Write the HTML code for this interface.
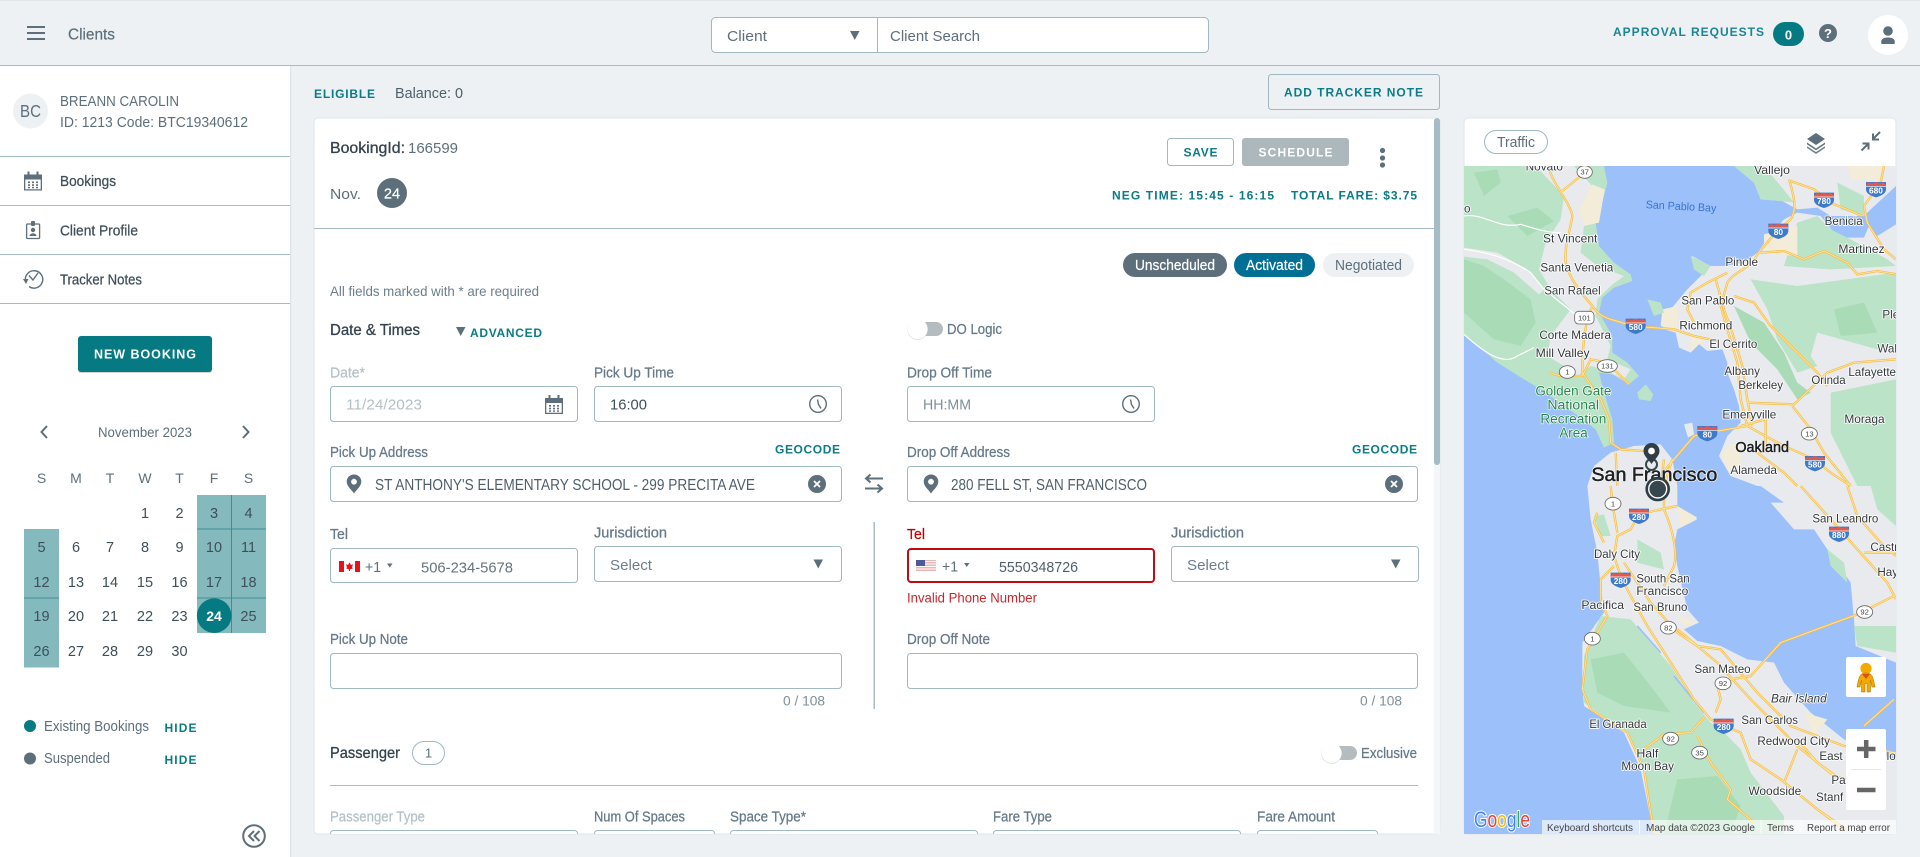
<!DOCTYPE html>
<html lang="en"><head><meta charset="utf-8"><title>Clients</title>
<style>
html,body{margin:0;padding:0;background:#edf1f4;overflow:hidden}
svg{display:block}
text{font-family:"Liberation Sans",sans-serif}
.r{font-size:15px;fill:#5c6f7b}
.d{font-size:15px;fill:#3f4f59}
.l{font-size:14.5px;fill:#64798a;stroke:#64798a;stroke-width:.25}
.g{font-size:14.5px;fill:#b3c0c6}
.h{font-size:12px;font-weight:bold;fill:#0a7c87}
.s{font-size:15.5px;fill:#33434d;stroke:#33434d;stroke-width:.3}
.c{font-size:14.5px;fill:#3f4f59;text-anchor:middle}
.w{font-size:14px;fill:#5c6f7b;text-anchor:middle}
.b{fill:#fff;stroke:#9fb8c2;stroke-width:1}
.m{font-size:35px;fill:#33373b;stroke:#fff;stroke-width:5;paint-order:stroke;stroke-linejoin:round}
.gg{font-size:41px;fill:#23864a;stroke:#fff;stroke-width:4;paint-order:stroke}
.sh{font-size:25px;font-weight:bold;fill:#fff;text-anchor:middle}
.st{font-size:23px;fill:#444;text-anchor:middle}
.ft{font-size:10.5px;fill:#444}
.dk{fill:#202124;stroke:#202124;stroke-width:1.4}
</style></head>
<body>
<svg xmlns="http://www.w3.org/2000/svg" width="1920" height="857" viewBox="0 0 1920 857">
<defs>
<clipPath id="mapclip"><rect x="1464" y="166" width="432" height="668"/></clipPath>
<clipPath id="cardclip"><rect x="314" y="118" width="1126" height="716"/></clipPath>
<g id="cal" fill="#5c6f7b"><path fill-rule="evenodd" d="M0,3H18V19H0ZM1.3,8V17.7H16.7V8Z"/><rect x="3.5" y="0" width="2" height="5"/><rect x="12.5" y="0" width="2" height="5"/><path d="M4,10h2v1.6H4zM8,10h2v1.6H8zM12,10h2v1.6h-2zM4,12.8h2v1.6H4zM8,12.8h2v1.6H8zM12,12.8h2v1.6h-2zM4,15.4h2v1.4H4zM8,15.4h2v1.4H8zM12,15.4h2v1.4h-2z"/></g>
<g id="clock" fill="none" stroke="#5c6f7b" stroke-width="1.4"><circle r="8.3"/><path d="M-.5,-4.5L.5,0.5L3,4.5"/></g>
<path id="pin" fill="#5c6f7b" fill-rule="evenodd" d="M0,-9.5C-4.2,-9.5-7.3,-6.4-7.3,-2.4C-7.3,2.5-2,6,0,9.5C2,6,7.3,2.5,7.3,-2.4C7.3,-6.4,4.2,-9.5,0,-9.5ZM0,-5.2A2.9,2.9 0 1 1 -.01,-5.2Z"/>
<g id="xc"><circle r="9" fill="#5c6f7b"/><path d="M-3,-3L3,3M3,-3L-3,3" stroke="#fff" stroke-width="1.8"/></g>
<path id="tri" fill="#5c6f7b" d="M0,0H9.5L4.75,9Z"/>
<g id="toggle"><rect x="9" y="3" width="27" height="14" rx="7" fill="#b4bcc0"/><circle cx="10.5" cy="10.5" r="10.3" fill="#d8dde0"/><circle cx="10.5" cy="10" r="10" fill="#fff"/></g>
<g id="ist"><path d="M-30,-22H30V0Q30,15 0,24Q-30,15 -30,0Z" fill="#3f79c9"/><path d="M-30,-14L-22,-21L-12,-18L0,-22L12,-18L22,-21L30,-14V-9H-30Z" fill="#dc5a50"/><path d="M-30,-9H30" stroke="#fff" stroke-width="2"/></g>
<g id="road1" fill="none">
<path d="M255,0C255,40 320,110 325,150C320,190 300,240 305,290C315,340 360,390 385,420C400,440 410,450 440,460L490,475L545,483L630,490L690,510L760,525"/>
<path d="M385,420C360,470 355,560 355,620L410,700L435,760L440,830L470,850L540,855"/>
<path d="M295,75L350,30"/>
<path d="M975,40C990,90 1000,130 980,160L930,205L880,265C860,310 810,315 790,350L770,420L790,490L820,590L830,700L850,780"/>
<path d="M755,340L780,430L805,500L835,600L850,700L865,780"/>
<path d="M850,780L730,800L690,810L630,880L600,915"/>
<path d="M980,45L1050,70L1110,115L1150,130L1195,150"/>
<path d="M1260,0L1250,50L1200,120L1210,170L1260,250L1296,280"/>
<path d="M890,260L960,255L1020,280L1080,255L1150,290L1180,325L1240,315L1296,325"/>
<path d="M790,320L730,350L680,380L670,430L690,470"/>
<path d="M810,390L870,410L920,480L990,550L1060,620L1090,660"/>
<path d="M850,710L990,715L1090,620L1170,590L1296,580"/>
<path d="M985,720L1040,790L1080,860L1160,960"/>
<path d="M850,780L960,840L1050,880L1100,920L1160,960"/>
<path d="M880,860L960,920L1000,960"/>
<path d="M600,960L625,880M590,960L600,880"/>
<path d="M460,960L455,860"/>
<path d="M255,620L290,630L355,630L380,580L430,590L460,620L495,655"/>
<path d="M830,780L905,760L905,860"/>
</g>
<g id="road2" fill="none">
<path d="M590,70L525,85L500,130L460,150L450,210L470,270L500,330L550,420L620,530L690,640L740,700L780,720L830,740L860,820L950,880L1060,970L1140,1030"/>
<path d="M600,0L600,70C630,140 640,200 630,240L600,300M590,70L640,60"/>
<path d="M480,230L560,350L640,440L700,480L770,490L880,620L980,720L1140,780L1296,800"/>
<path d="M640,430L760,530L860,640L1000,780L1110,870L1146,880"/>
<path d="M800,580L860,570L950,470L1180,385L1290,330"/>
<path d="M760,600L770,640L755,680M720,695L680,740L600,745L540,790"/>
<path d="M440,0L445,50L460,140M400,80L390,110L420,170M450,240L410,280L410,340L430,390L370,490L355,610L380,670L490,740L540,850L570,1044"/>
<path d="M700,750L740,830L800,910L790,940L870,1010"/>
<path d="M960,890L1000,790"/>
<path d="M1010,0L1100,100L1180,190L1270,290L1296,340M1150,0L1180,90L1250,170L1296,210M1200,200L1296,200"/>
<path d="M1200,720L1290,640"/>
<path d="M1000,760L1060,830L1130,880M1060,970L1146,1030"/>
</g>
</defs>

<rect width="1920" height="857" fill="#edf1f4"/>
<rect width="1920" height="1" fill="#dfe5e8"/>
<rect y="65" width="1920" height="1" fill="#a3bcc6"/>

<!-- header -->
<g fill="#5c6f7b"><rect x="27" y="26" width="18" height="2"/><rect x="27" y="32" width="18" height="2"/><rect x="27" y="38" width="18" height="2"/></g>
<text x="68" y="39.5" class="r" style="font-size:15.5px" stroke="#5c6f7b" stroke-width=".2" textLength="47" lengthAdjust="spacingAndGlyphs">Clients</text>
<rect class="b" x="711.5" y="17.5" width="497" height="35" rx="4"/>
<rect x="877" y="18" width="1" height="34" fill="#9fb8c2"/>
<text x="727" y="41" class="r" textLength="40" lengthAdjust="spacingAndGlyphs">Client</text>
<use href="#tri" x="850" y="31"/>
<text x="890" y="41" class="r" textLength="90" lengthAdjust="spacingAndGlyphs">Client Search</text>
<text x="1613" y="36" class="h" style="fill:#1a8595" textLength="151" lengthAdjust="spacing">APPROVAL REQUESTS</text>
<rect x="1773" y="22" width="31" height="24" rx="12" fill="#067a82"/>
<text x="1788.5" y="39.5" text-anchor="middle" style="font-size:13px;font-weight:bold;fill:#fff">0</text>
<circle cx="1828" cy="33" r="9" fill="#5c6f7b"/>
<text x="1828" y="38" text-anchor="middle" style="font-size:13px;font-weight:bold;fill:#fff">?</text>
<circle cx="1888" cy="35" r="20" fill="#fff"/>
<circle cx="1888" cy="31" r="4.8" fill="#5c6f7b"/>
<path d="M1881.5,44C1880,39 1884,37.5 1888,37.5C1892,37.5 1896,39 1894.5,44Z" fill="#5c6f7b"/>

<!-- sidebar -->
<rect y="66" width="290" height="791" fill="#fff"/>
<rect x="290" y="66" width="1.5" height="791" fill="#dfe6ea"/>
<circle cx="30.5" cy="111" r="17.5" fill="#edf1f4"/>
<text x="30.5" y="117" text-anchor="middle" style="font-size:17.5px;fill:#5c6f7b" textLength="21" lengthAdjust="spacingAndGlyphs">BC</text>
<text x="60" y="106" class="r" textLength="119" lengthAdjust="spacingAndGlyphs">BREANN CAROLIN</text>
<text x="60" y="127" class="r" textLength="188" lengthAdjust="spacingAndGlyphs">ID: 1213 Code: BTC19340612</text>
<g fill="#a3bcc6"><rect y="156" width="290" height="1"/><rect y="205" width="290" height="1"/><rect y="254" width="290" height="1"/><rect y="303" width="290" height="1"/></g>
<use href="#cal" x="24" y="171.5"/>
<text x="60" y="186" class="d" style="font-size:14.5px" stroke="#3f4f59" stroke-width=".25" textLength="56" lengthAdjust="spacingAndGlyphs">Bookings</text>
<g fill="none" stroke="#5c6f7b" stroke-width="1.3"><rect x="26.6" y="224" width="13" height="14.5" rx="1"/></g>
<rect x="31" y="221" width="4" height="5" rx="1" fill="#5c6f7b"/>
<circle cx="33" cy="230" r="2.2" fill="#5c6f7b"/><path d="M29.5,236C29.5,232.5 36.5,232.5 36.5,236Z" fill="#5c6f7b"/>
<text x="60" y="235.5" class="d" style="font-size:14.5px" stroke="#3f4f59" stroke-width=".25" textLength="78" lengthAdjust="spacingAndGlyphs">Client Profile</text>
<path d="M25.5,281A8.7,8.7 0 1 1 29,286.5M29,275.5L33,280L38,273" fill="none" stroke="#5c6f7b" stroke-width="1.4"/>
<path d="M23,279H28.5L26,284Z" fill="#5c6f7b"/>
<text x="60" y="284.5" class="d" style="font-size:14.5px" stroke="#3f4f59" stroke-width=".25" textLength="82" lengthAdjust="spacingAndGlyphs">Tracker Notes</text>
<rect x="78" y="337" width="134" height="36" rx="3" fill="#000" fill-opacity=".18"/>
<rect x="78" y="336" width="134" height="36" rx="3" fill="#067a82"/>
<text x="94" y="358.5" style="font-size:12.5px;font-weight:bold;fill:#fff" textLength="102" lengthAdjust="spacing">NEW BOOKING</text>
<path d="M47,426L41.5,432L47,438M243,426L248.5,432L243,438" fill="none" stroke="#5c6f7b" stroke-width="2"/>
<text x="98" y="437" class="r" style="font-size:14px" textLength="94" lengthAdjust="spacingAndGlyphs">November 2023</text>
<g><text x="41.5" y="483" class="w">S</text><text x="76" y="483" class="w">M</text><text x="110" y="483" class="w">T</text><text x="145" y="483" class="w">W</text><text x="179.5" y="483" class="w">T</text><text x="214" y="483" class="w">F</text><text x="248.5" y="483" class="w">S</text></g>
<rect x="197" y="495" width="69" height="138" fill="#84babd"/>
<rect x="24" y="529" width="35" height="138.5" fill="#84babd"/>
<path d="M231.5,495V633M197,529H266M24,598H59M197,598H266" stroke="#3e8f95" stroke-width="1" fill="none"/>
<ellipse cx="214.2" cy="615.7" rx="17.3" ry="17.3" fill="#067a82"/>
<text x="145" y="518" class="c">1</text><text x="179.5" y="518" class="c">2</text><text x="214" y="518" class="c">3</text><text x="248.5" y="518" class="c">4</text>
<text x="41.5" y="552" class="c">5</text><text x="76" y="552" class="c">6</text><text x="110" y="552" class="c">7</text><text x="145" y="552" class="c">8</text><text x="179.5" y="552" class="c">9</text><text x="214" y="552" class="c">10</text><text x="248.5" y="552" class="c">11</text>
<text x="41.5" y="587" class="c">12</text><text x="76" y="587" class="c">13</text><text x="110" y="587" class="c">14</text><text x="145" y="587" class="c">15</text><text x="179.5" y="587" class="c">16</text><text x="214" y="587" class="c">17</text><text x="248.5" y="587" class="c">18</text>
<text x="41.5" y="621" class="c">19</text><text x="76" y="621" class="c">20</text><text x="110" y="621" class="c">21</text><text x="145" y="621" class="c">22</text><text x="179.5" y="621" class="c">23</text><text x="214" y="621" text-anchor="middle" style="font-size:14px;font-weight:bold;fill:#fff">24</text><text x="248.5" y="621" class="c">25</text>
<text x="41.5" y="656" class="c">26</text><text x="76" y="656" class="c">27</text><text x="110" y="656" class="c">28</text><text x="145" y="656" class="c">29</text><text x="179.5" y="656" class="c">30</text>
<circle cx="30" cy="726" r="6" fill="#067a82"/>
<text x="44" y="731" class="r" style="font-size:14.5px" textLength="105" lengthAdjust="spacingAndGlyphs">Existing Bookings</text>
<text x="164.5" y="732" class="h" textLength="32" lengthAdjust="spacing">HIDE</text>
<circle cx="30" cy="758.5" r="6" fill="#5c6f7b"/>
<text x="44" y="763" class="r" style="font-size:14.5px" textLength="66" lengthAdjust="spacingAndGlyphs">Suspended</text>
<text x="164.5" y="764" class="h" textLength="32" lengthAdjust="spacing">HIDE</text>
<circle cx="254" cy="836" r="10.8" fill="none" stroke="#5c6f7b" stroke-width="2"/>
<path d="M254,831L249,836L254,841M259.5,831L254.5,836L259.5,841" fill="none" stroke="#5c6f7b" stroke-width="2"/>

<!-- main top -->
<text x="314" y="98" class="h" textLength="61" lengthAdjust="spacing">ELIGIBLE</text>
<text x="395" y="98" class="r" style="fill:#4e5f6a" textLength="68" lengthAdjust="spacingAndGlyphs">Balance: 0</text>
<rect x="1268.5" y="74.5" width="171" height="35" rx="3" fill="#edf1f4" stroke="#9fb8c2"/>
<text x="1284" y="96.5" class="h" textLength="139" lengthAdjust="spacing">ADD TRACKER NOTE</text>

<!-- booking card -->
<rect x="314" y="118" width="1126" height="716" rx="4" fill="#fff" stroke="#dde5e9" stroke-width="1"/>
<rect x="1434" y="118" width="6" height="716" fill="#f4f6f7"/>
<rect x="1434" y="118" width="6" height="347" rx="3" fill="#a3bcc6"/>
<text x="330" y="153" class="s" textLength="75" lengthAdjust="spacingAndGlyphs">BookingId:</text>
<text x="408" y="153" class="r" textLength="50" lengthAdjust="spacingAndGlyphs">166599</text>
<text x="330" y="199" class="r" textLength="31" lengthAdjust="spacingAndGlyphs">Nov.</text>
<circle cx="392" cy="193" r="15" fill="#5c6f7b"/>
<text x="392" y="198.5" text-anchor="middle" style="font-size:14.5px;fill:#fff" stroke="#fff" stroke-width=".2">24</text>
<rect x="1167.5" y="138.5" width="66" height="27" rx="3" fill="#fff" stroke="#9fb8c2"/>
<text x="1183.5" y="156.5" class="h" textLength="34" lengthAdjust="spacing">SAVE</text>
<rect x="1242" y="138" width="107" height="28" rx="3" fill="#acb8bc"/>
<text x="1258.5" y="156.5" class="h" style="fill:#fff" textLength="74" lengthAdjust="spacing">SCHEDULE</text>
<g fill="#5c6f7b"><circle cx="1382.5" cy="150.5" r="2.6"/><circle cx="1382.5" cy="158" r="2.6"/><circle cx="1382.5" cy="165" r="2.6"/></g>
<text x="1112" y="199.5" class="h" textLength="162" lengthAdjust="spacing">NEG TIME: 15:45 - 16:15</text>
<text x="1291" y="199.5" class="h" textLength="126" lengthAdjust="spacing">TOTAL FARE: $3.75</text>
<rect x="314" y="228" width="1120" height="1" fill="#a3bcc6"/>
<rect x="1123" y="253" width="104" height="24" rx="12" fill="#5c6f7b"/>
<text x="1135" y="270" style="font-size:14.5px;fill:#fff" stroke="#fff" stroke-width=".2" textLength="80" lengthAdjust="spacingAndGlyphs">Unscheduled</text>
<rect x="1234" y="253" width="81" height="24" rx="12" fill="#006f96"/>
<text x="1246" y="270" style="font-size:14.5px;fill:#fff" stroke="#fff" stroke-width=".2" textLength="57" lengthAdjust="spacingAndGlyphs">Activated</text>
<rect x="1323" y="253" width="91" height="24" rx="12" fill="#edf1f4"/>
<text x="1335" y="270" style="font-size:14.5px;fill:#5c6f7b" textLength="67" lengthAdjust="spacingAndGlyphs">Negotiated</text>
<text x="330" y="296" style="font-size:14px;fill:#6b7f8b" textLength="209" lengthAdjust="spacingAndGlyphs">All fields marked with * are required</text>
<text x="330" y="335" class="s" textLength="90" lengthAdjust="spacingAndGlyphs">Date &amp; Times</text>
<path d="M456,327H465.5L460.7,336Z" fill="#5c6f7b"/>
<text x="470" y="337" class="h" textLength="72" lengthAdjust="spacing">ADVANCED</text>
<use href="#toggle" x="907" y="319"/>
<text x="947" y="334" class="l" textLength="55" lengthAdjust="spacingAndGlyphs">DO Logic</text>

<text x="330" y="377.5" class="g" stroke="#b3c0c6" stroke-width=".2" textLength="35" lengthAdjust="spacingAndGlyphs">Date*</text>
<text x="594" y="377.5" class="l" textLength="80" lengthAdjust="spacingAndGlyphs">Pick Up Time</text>
<text x="907" y="377.5" class="l" textLength="85" lengthAdjust="spacingAndGlyphs">Drop Off Time</text>
<rect class="b" x="330.5" y="386.5" width="247" height="35" rx="3"/>
<rect class="b" x="594.5" y="386.5" width="247" height="35" rx="3"/>
<rect class="b" x="907.5" y="386.5" width="247" height="35" rx="3"/>
<text x="346" y="409.5" style="font-size:15px;fill:#b3c0c6" textLength="76" lengthAdjust="spacingAndGlyphs">11/24/2023</text>
<use href="#cal" x="545" y="395"/>
<text x="610" y="409.5" class="d" textLength="37" lengthAdjust="spacingAndGlyphs">16:00</text>
<use href="#clock" x="818" y="404"/>
<text x="923" y="409.5" class="r" style="fill:#7d8f9a" textLength="48" lengthAdjust="spacingAndGlyphs">HH:MM</text>
<use href="#clock" x="1131" y="404"/>

<text x="330" y="457" class="l" textLength="98" lengthAdjust="spacingAndGlyphs">Pick Up Address</text>
<text x="775" y="453.5" class="h" textLength="65" lengthAdjust="spacing">GEOCODE</text>
<text x="907" y="457" class="l" textLength="103" lengthAdjust="spacingAndGlyphs">Drop Off Address</text>
<text x="1352" y="453.5" class="h" textLength="65" lengthAdjust="spacing">GEOCODE</text>
<rect class="b" x="330.5" y="466.5" width="511" height="35" rx="3"/>
<rect class="b" x="907.5" y="466.5" width="510" height="35" rx="3"/>
<use href="#pin" x="354" y="484"/>
<text x="375" y="490" class="d" style="font-size:15.5px;fill:#4e5f6a" textLength="380" lengthAdjust="spacingAndGlyphs">ST ANTHONY'S ELEMENTARY SCHOOL - 299 PRECITA AVE</text>
<use href="#xc" x="817" y="484"/>
<use href="#pin" x="931" y="484"/>
<text x="951" y="490" class="d" style="font-size:15.5px;fill:#4e5f6a" textLength="196" lengthAdjust="spacingAndGlyphs">280 FELL ST, SAN FRANCISCO</text>
<use href="#xc" x="1394" y="484"/>
<path d="M883,478.5H867M870.5,474.5L866,478.5L870.5,482.5M865,488.5H881M877.5,484.5L882,488.5L877.5,492.5" fill="none" stroke="#5c6f7b" stroke-width="2"/>

<rect x="873.5" y="522" width="1.4" height="187" fill="#9fb8c2"/>
<text x="330" y="539" class="l" textLength="18" lengthAdjust="spacingAndGlyphs">Tel</text>
<rect class="b" x="330.5" y="548.5" width="247" height="34" rx="3"/>
<rect x="339" y="561" width="21" height="11" fill="#fff"/><rect x="339" y="561" width="5" height="11" fill="#e8111a"/><rect x="355" y="561" width="5" height="11" fill="#e8111a"/>
<path d="M349.5,562.5L351,565L353,564.3L352,567.5L353,568.3L350,569.5V571H349V569.5L346,568.3L347,567.5L346,564.3L348,565Z" fill="#e8111a"/>
<text x="365" y="572" class="r" textLength="16" lengthAdjust="spacingAndGlyphs">+1</text>
<path d="M387,563.5H392.5L389.8,567.5Z" fill="#5c6f7b"/>
<text x="421" y="572.5" class="r" style="fill:#68737a" textLength="92" lengthAdjust="spacingAndGlyphs">506-234-5678</text>
<text x="594" y="537.5" class="l" textLength="73" lengthAdjust="spacingAndGlyphs">Jurisdiction</text>
<rect class="b" x="594.5" y="546.5" width="247" height="35" rx="3"/>
<text x="610" y="570" class="r" style="fill:#6b7f8b" textLength="42" lengthAdjust="spacingAndGlyphs">Select</text>
<use href="#tri" x="813.5" y="559.5"/>
<text x="907" y="539" style="font-size:14.5px;fill:#c00000" stroke="#c00000" stroke-width=".2" textLength="18" lengthAdjust="spacingAndGlyphs">Tel</text>
<rect x="908" y="549" width="246" height="33" rx="3" fill="#fff" stroke="#c20a12" stroke-width="2"/>
<rect x="916" y="560" width="20" height="11" fill="#e9b4b4"/>
<path d="M916,561.5h20M916,564h20M916,566.5h20M916,569h20" stroke="#fff" stroke-width=".9"/>
<rect x="916" y="560" width="9" height="6" fill="#4c5a9a"/>
<text x="942" y="571.5" class="r" textLength="16" lengthAdjust="spacingAndGlyphs">+1</text>
<path d="M964,563H969.5L966.8,567Z" fill="#5c6f7b"/>
<text x="999" y="572" class="r" style="fill:#4e5f6a" textLength="79" lengthAdjust="spacingAndGlyphs">5550348726</text>
<text x="907" y="602.5" style="font-size:14px;fill:#c7272b" textLength="130" lengthAdjust="spacingAndGlyphs">Invalid Phone Number</text>
<text x="1171" y="537.5" class="l" textLength="73" lengthAdjust="spacingAndGlyphs">Jurisdiction</text>
<rect class="b" x="1171.5" y="546.5" width="247" height="35" rx="3"/>
<text x="1187" y="570" class="r" style="fill:#6b7f8b" textLength="42" lengthAdjust="spacingAndGlyphs">Select</text>
<use href="#tri" x="1391" y="559.5"/>

<text x="330" y="644" class="l" textLength="78" lengthAdjust="spacingAndGlyphs">Pick Up Note</text>
<rect class="b" x="330.5" y="653.5" width="511" height="35" rx="3"/>
<text x="783" y="705.5" style="font-size:13.5px;fill:#7d8f9a" textLength="42" lengthAdjust="spacingAndGlyphs">0 / 108</text>
<text x="907" y="644" class="l" textLength="83" lengthAdjust="spacingAndGlyphs">Drop Off Note</text>
<rect class="b" x="907.5" y="653.5" width="510" height="35" rx="3"/>
<text x="1360" y="705.5" style="font-size:13.5px;fill:#7d8f9a" textLength="42" lengthAdjust="spacingAndGlyphs">0 / 108</text>

<text x="330" y="758" class="s" style="font-size:16px" textLength="70" lengthAdjust="spacingAndGlyphs">Passenger</text>
<rect class="b" x="412.5" y="741.5" width="32" height="23" rx="11.5"/>
<text x="428.5" y="757.5" text-anchor="middle" style="font-size:13px;fill:#5c6f7b">1</text>
<use href="#toggle" x="1321" y="743"/>
<text x="1361" y="758" class="l" textLength="56" lengthAdjust="spacingAndGlyphs">Exclusive</text>
<rect x="330" y="785" width="1088" height="1" fill="#a3bcc6"/>
<text x="330" y="821.5" class="g" stroke="#b3c0c6" stroke-width=".2" textLength="95" lengthAdjust="spacingAndGlyphs">Passenger Type</text>
<text x="594" y="821.5" class="l" textLength="91" lengthAdjust="spacingAndGlyphs">Num Of Spaces</text>
<text x="730" y="821.5" class="l" textLength="76" lengthAdjust="spacingAndGlyphs">Space Type*</text>
<text x="993" y="821.5" class="l" textLength="59" lengthAdjust="spacingAndGlyphs">Fare Type</text>
<text x="1257" y="821.5" class="l" textLength="78" lengthAdjust="spacingAndGlyphs">Fare Amount</text>
<g clip-path="url(#cardclip)">
<rect class="b" x="330.5" y="830.5" width="247" height="30" rx="3"/>
<rect class="b" x="594.5" y="830.5" width="120" height="30" rx="3"/>
<rect class="b" x="730.5" y="830.5" width="247" height="30" rx="3"/>
<rect class="b" x="993.5" y="830.5" width="247" height="30" rx="3"/>
<rect class="b" x="1257.5" y="830.5" width="120" height="30" rx="3"/>
</g>

<!-- map card -->
<rect x="1464" y="118" width="432" height="716" rx="4" fill="#fff" stroke="#dde5e9"/>
<rect class="b" x="1484.5" y="130.5" width="63" height="23" rx="11.5"/>
<text x="1497" y="147" class="r" style="font-size:14.5px" textLength="38" lengthAdjust="spacingAndGlyphs">Traffic</text>
<g fill="#5c6f7b"><path d="M1816,133L1825,139L1816,145L1807,139Z"/><path d="M1807,142.5L1816,148.5L1825,142.5V144.3L1816,150.3L1807,144.3Z"/><path d="M1807,146.2L1816,152L1825,146.2V148L1816,154L1807,148Z" opacity=".85"/></g>
<path d="M1880,132L1873.5,138.5M1873,133.5V139.5H1879M1861.5,150.5L1868,144M1862.5,143.5H1868.5V149.5" fill="none" stroke="#5c6f7b" stroke-width="2"/>

<g clip-path="url(#mapclip)">
<rect x="1464" y="166" width="432" height="668" fill="#9cc0f9"/>
<g transform="translate(1464,166) scale(.33333)">
<!-- Marin -->
<path fill="#bbe3c7" d="M0,0L420,0L430,50L415,110L395,170L405,240L450,290L500,325L505,345L450,365L415,395L405,440L445,510L445,560L490,590L525,630L495,655L445,625L405,620L420,680L445,760L450,830L420,845L395,790L330,740L230,670L180,640L100,590L0,505Z"/>
<path fill="#aadbb7" d="M0,280L60,300L120,340L200,400L215,470L170,540L90,520L0,440ZM30,20L100,10L110,50L60,90ZM130,150L220,125L270,165L190,210Z"/>
<path fill="#e8eaed" d="M215,0L330,0L385,60L365,140L350,260L400,300L480,330L440,360L400,400L395,450L440,540L430,580L500,610L480,640L420,610L380,600L340,630L300,600L250,570L260,510L320,430L260,370L225,310L245,230L290,160L300,90Z"/>
<path fill="#e8eaed" d="M0,245L100,260L190,310L240,370L225,385L150,320L70,280L0,272Z"/>
<path fill="#f3ecd8" d="M385,55L422,70L405,170L360,180L345,130Z"/>
<path fill="none" stroke="#fff" stroke-width="3.5" d="M0,150C60,140 100,190 170,175C220,190 250,200 290,200M0,250C80,260 140,280 200,320L240,370L340,450M0,505C60,560 120,600 160,570L210,545"/>
<!-- Vallejo -->
<path fill="#e8eaed" d="M810,0L870,50L890,100L955,105L1000,130L1060,125L1100,150L1200,150L1220,130L1296,60L1296,0Z"/>
<path fill="#bbe3c7" d="M810,0L900,0L950,60L990,110L950,105L890,100L870,50ZM1120,50L1200,90L1200,150L1130,130Z"/>
<path fill="#f3ecd8" d="M1150,0L1260,0L1250,40L1160,40Z"/>
<!-- East Bay -->
<path fill="#e8eaed" d="M1296,175L1240,210L1215,180L1200,215L1120,215L1090,175L1070,150L1000,140L960,160L920,205L880,260L840,290L780,300L740,300L720,290L685,270L690,310L715,325L670,370L620,430L590,470L600,490L635,500L645,545L680,560L700,530L730,555L775,550L790,590L790,620L810,670L825,720L830,770L790,810L765,870L800,930L880,960L1296,960Z"/>
<path fill="#bbe3c7" d="M1296,300L1270,280L1160,220L1100,190L1060,150L1000,170L960,300L1100,310L1296,300ZM860,340L1000,360L1296,320L1296,560L1240,550L1060,500L1040,570L1060,600L1000,620L940,520L910,430Z"/>
<path fill="#aadbb7" d="M810,420L900,470L960,560L1000,650L1040,680L1000,700L940,610L860,530ZM1110,430L1200,410L1240,500L1130,510Z"/>
<path fill="#bbe3c7" d="M1100,680L1296,640L1296,960L1180,960L1100,800Z"/>
<path fill="#f3ecd8" d="M900,205L1000,180L1000,270L900,262ZM595,430L640,420L640,490L590,480ZM770,860L830,820L830,900L800,930ZM680,510L720,520L680,560Z"/>
<path fill="#bbe3c7" d="M680,270L740,300L720,330L690,310ZM550,400L590,410L600,440L570,450ZM520,680L545,655L568,685L560,705L525,700Z"/>
<path fill="#e8eaed" d="M660,775L685,770L690,805L672,815Z"/>
<!-- Peninsula -->
<path fill="#e8eaed" d="M440,860L390,900L370,960L380,1060L400,1160L410,1260L420,1340L355,1430L355,1560L360,1620L480,1700L530,1810L560,1960L570,2004L1296,2004L1296,1780L1230,1760L1140,1720L1040,1640L960,1550L945,1520L930,1490L850,1480L770,1440L700,1425L660,1390L705,1370L670,1330L640,1200L630,1140L640,1090L700,1060L640,1020L640,960L625,880L590,835L510,840Z"/>
<g transform="translate(0,960)">
<path fill="#e8eaed" d="M890,0L960,50L920,50L990,130L1050,130L1090,190L1160,290L1170,400L1175,480L1296,530L1296,0Z"/>
<path fill="#bbe3c7" d="M1170,420L1296,420L1296,500L1180,480ZM1090,190L1140,230L1150,290L1100,240ZM1220,0L1296,0L1296,120L1240,70Z"/>
<path fill="#bbe3c7" d="M410,390L500,400L560,470L620,540L690,650L740,710L780,740L830,790L860,860L960,990L960,1044L570,1044L540,860L490,740L360,650L360,510Z"/>
<path fill="#aadbb7" d="M380,520L480,500L560,600L620,680L480,660L400,620ZM640,880L760,870L830,960L800,1044L600,1044Z"/>
<path fill="#bbe3c7" d="M520,160L590,200L600,250L520,230ZM390,90L420,85L440,150L410,150Z"/>
<path fill="#f3ecd8" d="M640,390L700,410L660,420ZM1020,680L1090,700L1050,750ZM640,60L700,95L650,125Z"/>
<path fill="none" stroke="#9cc0f9" stroke-width="5" d="M630,570L720,680M520,420L590,500"/>
</g>
<use href="#road1" stroke="#f8bd45" stroke-width="7"/>
<use href="#road1" stroke="#fde9a8" stroke-width="2.5"/>
<g transform="translate(0,960)">
<use href="#road2" stroke="#f8bd45" stroke-width="7"/>
<use href="#road2" stroke="#fde9a8" stroke-width="2.5"/>
</g>
<!-- labels top -->
<text class="m" x="185" y="14" textLength="112" lengthAdjust="spacingAndGlyphs">Novato</text>
<text class="m" x="870" y="24" textLength="108" lengthAdjust="spacingAndGlyphs">Vallejo</text>
<text transform="rotate(3 650 125)" x="545" y="132" style="font-size:33px;fill:#3a72d4" textLength="212" lengthAdjust="spacingAndGlyphs">San Pablo Bay</text>
<text class="m" x="1082" y="177" textLength="114" lengthAdjust="spacingAndGlyphs">Benicia</text>
<text class="m" x="237" y="230" textLength="163" lengthAdjust="spacingAndGlyphs">St Vincent</text>
<text class="m" x="1123" y="261" textLength="139" lengthAdjust="spacingAndGlyphs">Martinez</text>
<text class="m" x="784" y="300" textLength="98" lengthAdjust="spacingAndGlyphs">Pinole</text>
<text class="m" x="229" y="317" textLength="219" lengthAdjust="spacingAndGlyphs">Santa Venetia</text>
<text class="m" x="241" y="386" textLength="169" lengthAdjust="spacingAndGlyphs">San Rafael</text>
<text class="m" x="652" y="416" textLength="159" lengthAdjust="spacingAndGlyphs">San Pablo</text>
<text class="m" x="646" y="491" textLength="159" lengthAdjust="spacingAndGlyphs">Richmond</text>
<text class="m" x="226" y="519" textLength="215" lengthAdjust="spacingAndGlyphs">Corte Madera</text>
<text class="m" x="736" y="546" textLength="144" lengthAdjust="spacingAndGlyphs">El Cerrito</text>
<text class="m" x="215" y="573" textLength="162" lengthAdjust="spacingAndGlyphs">Mill Valley</text>
<text class="m" x="781" y="627" textLength="107" lengthAdjust="spacingAndGlyphs">Albany</text>
<text class="m" x="1153" y="630" textLength="143" lengthAdjust="spacingAndGlyphs">Lafayette</text>
<text class="m" x="1042" y="654" textLength="103" lengthAdjust="spacingAndGlyphs">Orinda</text>
<text class="m" x="823" y="669" textLength="134" lengthAdjust="spacingAndGlyphs">Berkeley</text>
<text class="gg" x="214" y="689" textLength="228" lengthAdjust="spacingAndGlyphs">Golden Gate</text>
<text class="gg" x="250" y="731" textLength="155" lengthAdjust="spacingAndGlyphs">National</text>
<text class="gg" x="229" y="773" textLength="198" lengthAdjust="spacingAndGlyphs">Recreation</text>
<text class="gg" x="286" y="815" textLength="85" lengthAdjust="spacingAndGlyphs">Area</text>
<text class="m" x="775" y="758" textLength="162" lengthAdjust="spacingAndGlyphs">Emeryville</text>
<text class="m" x="1141" y="771" textLength="121" lengthAdjust="spacingAndGlyphs">Moraga</text>
<text class="m" x="814" y="858" style="font-size:43px" textLength="161" lengthAdjust="spacingAndGlyphs">Oakland</text>
<text class="dk" x="814" y="858" style="font-size:43px" textLength="161" lengthAdjust="spacingAndGlyphs" aria-hidden="true">Oakland</text>
<text class="m" x="799" y="924" textLength="140" lengthAdjust="spacingAndGlyphs">Alameda</text>
<text class="m" x="1255" y="458">Ple</text><text class="m" x="1240" y="560">Wal</text><text class="m" x="0" y="140">o</text>
<!-- labels bottom -->
<g transform="translate(0,960)">
<text class="m" x="1045" y="110" textLength="198" lengthAdjust="spacingAndGlyphs">San Leandro</text>
<text class="m" x="1219" y="195">Castr</text>
<text class="m" x="390" y="216" textLength="138" lengthAdjust="spacingAndGlyphs">Daly City</text>
<text class="m" x="1240" y="270">Hay</text>
<text class="m" x="517" y="290" textLength="160" lengthAdjust="spacingAndGlyphs">South San</text>
<text class="m" x="517" y="327" textLength="156" lengthAdjust="spacingAndGlyphs">Francisco</text>
<text class="m" x="352" y="369" textLength="128" lengthAdjust="spacingAndGlyphs">Pacifica</text>
<text class="m" x="508" y="375" textLength="162" lengthAdjust="spacingAndGlyphs">San Bruno</text>
<text class="m" x="691" y="561" textLength="169" lengthAdjust="spacingAndGlyphs">San Mateo</text>
<text class="m" x="921" y="650" font-style="italic" textLength="167" lengthAdjust="spacingAndGlyphs">Bair Island</text>
<text class="m" x="832" y="714" textLength="170" lengthAdjust="spacingAndGlyphs">San Carlos</text>
<text class="m" x="376" y="726" textLength="172" lengthAdjust="spacingAndGlyphs">El Granada</text>
<text class="m" x="880" y="777" textLength="218" lengthAdjust="spacingAndGlyphs">Redwood City</text>
<text class="m" x="1066" y="822" textLength="70" lengthAdjust="spacingAndGlyphs">East</text>
<text class="m" x="1268" y="822">lo</text>
<text class="m" x="517" y="815" textLength="66" lengthAdjust="spacingAndGlyphs">Half</text>
<text class="m" x="472" y="852" textLength="158" lengthAdjust="spacingAndGlyphs">Moon Bay</text>
<text class="m" x="1102" y="894">Pa</text>
<text class="m" x="853" y="927" textLength="159" lengthAdjust="spacingAndGlyphs">Woodside</text>
<text class="m" x="1056" y="945">Stanf</text>
</g>
<!-- interstate shields -->
<use href="#ist" x="515" y="480"/><text class="sh" x="515" y="492">580</text>
<use href="#ist" x="943" y="195"/><text class="sh" x="943" y="207">80</text>
<use href="#ist" x="1080" y="102"/><text class="sh" x="1080" y="114">780</text>
<use href="#ist" x="1236" y="70"/><text class="sh" x="1236" y="82">680</text>
<use href="#ist" x="730" y="802"/><text class="sh" x="730" y="814">80</text>
<use href="#ist" x="1053" y="892"/><text class="sh" x="1053" y="904">580</text>
<g transform="translate(0,960)">
<use href="#ist" x="525" y="90"/><text class="sh" x="525" y="102">280</text>
<use href="#ist" x="1125" y="144"/><text class="sh" x="1125" y="156">880</text>
<use href="#ist" x="470" y="282"/><text class="sh" x="470" y="294">280</text>
<use href="#ist" x="779" y="720"/><text class="sh" x="779" y="732">280</text>
</g>
<!-- state shields -->
<g fill="#fff" stroke="#666" stroke-width="2.5">
<ellipse cx="362" cy="18" rx="23" ry="19"/><rect x="332" y="436" width="58" height="38" rx="12"/><ellipse cx="430" cy="600" rx="30" ry="19"/><ellipse cx="310" cy="618" rx="24" ry="19"/><ellipse cx="1036" cy="803" rx="24" ry="19"/>
<ellipse cx="447" cy="1013" rx="24" ry="19"/><ellipse cx="385" cy="1418" rx="24" ry="19"/><ellipse cx="613" cy="1385" rx="24" ry="19"/><ellipse cx="1202" cy="1338" rx="24" ry="19"/><ellipse cx="777" cy="1552" rx="24" ry="19"/><ellipse cx="620" cy="1718" rx="24" ry="19"/><ellipse cx="707" cy="1760" rx="24" ry="19"/>
</g>
<text class="st" x="362" y="26">37</text><text class="st" x="361" y="464">101</text><text class="st" x="430" y="608">131</text><text class="st" x="310" y="626">1</text><text class="st" x="1036" y="811">13</text>
<text class="st" x="447" y="1021">1</text><text class="st" x="385" y="1426">1</text><text class="st" x="613" y="1393">82</text><text class="st" x="1202" y="1346">92</text><text class="st" x="777" y="1560">92</text><text class="st" x="620" y="1726">92</text><text class="st" x="707" y="1768">35</text>
<text class="m" x="382" y="945" style="font-size:58px" textLength="378" lengthAdjust="spacingAndGlyphs">San Francisco</text>
<text class="dk" x="382" y="945" style="font-size:58px" textLength="378" lengthAdjust="spacingAndGlyphs" aria-hidden="true">San Francisco</text>
</g>
<!-- markers -->
<circle cx="1651.5" cy="464.5" r="5.5" fill="none" stroke="#37474f" stroke-width="2"/>
<path d="M1651.5,443C1647,443 1643.5,446.5 1643.5,451C1643.5,456 1649,460 1651.5,464C1654,460 1659.5,456 1659.5,451C1659.5,446.5 1656,443 1651.5,443Z" fill="#2f3e46"/>
<circle cx="1651.5" cy="451" r="3.4" fill="#fff"/>
<circle cx="1657.7" cy="489" r="8.5" fill="#37474f"/>
<circle cx="1657.7" cy="489" r="8.8" fill="none" stroke="#fff" stroke-width="1"/>
<circle cx="1657.7" cy="489" r="11" fill="none" stroke="#2f3e46" stroke-width="2.6"/>
<!-- attribution -->
<rect x="1542" y="820" width="354" height="14" fill="#fff" fill-opacity=".65"/>
<path d="M1639.5,820V834M1761,820V834M1801,820V834" stroke="#fff" stroke-opacity=".7"/>
<text class="ft" x="1547" y="831" textLength="86" lengthAdjust="spacingAndGlyphs">Keyboard shortcuts</text>
<text class="ft" x="1646" y="831" textLength="109" lengthAdjust="spacingAndGlyphs">Map data ©2023 Google</text>
<text class="ft" x="1767" y="831" textLength="27" lengthAdjust="spacingAndGlyphs">Terms</text>
<text class="ft" x="1807" y="831" textLength="83" lengthAdjust="spacingAndGlyphs">Report a map error</text>
<text x="1474" y="827" style="font-size:22px;stroke:#fff;stroke-width:2;paint-order:stroke" textLength="56" lengthAdjust="spacingAndGlyphs"><tspan fill="#4285f4">G</tspan><tspan fill="#ea4335">o</tspan><tspan fill="#fbbc05">o</tspan><tspan fill="#4285f4">g</tspan><tspan fill="#34a853">l</tspan><tspan fill="#ea4335">e</tspan></text>
<!-- controls -->
<rect x="1846" y="657" width="40" height="40" rx="2" fill="#fff"/>
<circle cx="1866" cy="668.5" r="5.6" fill="#f2a900"/>
<path d="M1866,673C1860,673 1859,676 1857,687L1860,687L1861.5,680V692H1865V683.5H1867V692H1870.5V680L1872,687L1875,687C1873,676 1872,673 1866,673Z" fill="#f2a900" stroke="#a36f00" stroke-width=".5"/>
<path d="M1862,674L1866,679L1870,674Z" fill="#d9531e"/>
<rect x="1846" y="729" width="40" height="81" rx="2" fill="#fff"/>
<rect x="1851" y="769" width="30" height="1" fill="#e6e6e6"/>
<path d="M1857,749H1875.5M1866.2,740V758M1857,790H1875.5" stroke="#666" stroke-width="4.5" fill="none"/>
</g>
</svg>
</body></html>
